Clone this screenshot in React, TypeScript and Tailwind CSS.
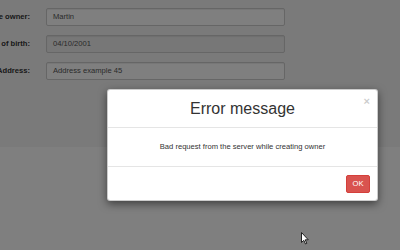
import React from 'react';

const rows = [
  { label: 'Name of the owner:', value: 'Martin', readOnly: false },
  { label: 'Date of birth:', value: '04/10/2001', readOnly: true },
  { label: 'Address:', value: 'Address example 45', readOnly: false },
];

export default function App() {
  return (
    <div
      className="relative w-[400px] h-[250px] overflow-hidden bg-white"
      style={{ fontFamily: '"Liberation Sans", Arial, sans-serif' }}
    >
      {/* Form behind the modal */}
      <div className="h-[147px] bg-[#f5f5f5] pt-[8px] flex flex-col gap-[9px]">
        {rows.map((row) => (
          <div key={row.label} className="flex items-center h-[18px]">
            <div className="w-[30px] shrink-0 flex justify-end">
              <span className="shrink-0 whitespace-nowrap text-[7.6px] font-bold text-[#333]">
                {row.label}
              </span>
            </div>
            <div
              className={`ml-[16px] w-[239px] h-[18px] flex items-center px-[6px] border border-[#ccc] rounded-[2px] shadow-[inset_0_1px_1px_rgba(0,0,0,0.075)] text-[7.6px] text-[#555] ${
                row.readOnly ? 'bg-[#eee]' : 'bg-white'
              }`}
            >
              {row.value}
            </div>
          </div>
        ))}
      </div>

      {/* Backdrop */}
      <div className="absolute inset-0 bg-black/50" />

      {/* Modal */}
      <div className="absolute left-[107px] top-[89px] w-[271px] bg-white border border-black/20 rounded-[3px] shadow-[0_3px_8px_rgba(0,0,0,0.5)]">
        <div className="relative h-[38px] flex items-center justify-center border-b border-[#e5e5e5]">
          <h4 className="text-[16px] text-[#333] leading-none">Error message</h4>
          <button
            type="button"
            className="absolute right-[7px] top-[6px] text-[11px] font-bold leading-none text-black opacity-20"
            aria-label="Close"
          >
            ×
          </button>
        </div>
        <div className="h-[39px] flex items-center justify-center border-b border-[#e5e5e5]">
          <p className="text-[7.6px] text-[#333]">Bad request from the server while creating owner</p>
        </div>
        <div className="h-[33px] flex items-center justify-end pr-[7px]">
          <button
            type="button"
            className="w-[24px] h-[18px] flex items-center justify-center bg-[#d9534f] border border-[#d43f3a] rounded-[2px] text-white text-[7.6px]"
          >
            OK
          </button>
        </div>
      </div>

      {/* Mouse cursor */}
      <svg className="absolute left-[301px] top-[232px]" width="8" height="13" viewBox="0 0 8 13">
        <path d="M0.5 0.5 L0.5 10.5 L2.8 8.3 L4.5 12 L5.8 11.4 L4.2 7.8 L7.3 7.8 Z" fill="white" stroke="#222" strokeWidth="1" />
      </svg>
    </div>
  );
}
